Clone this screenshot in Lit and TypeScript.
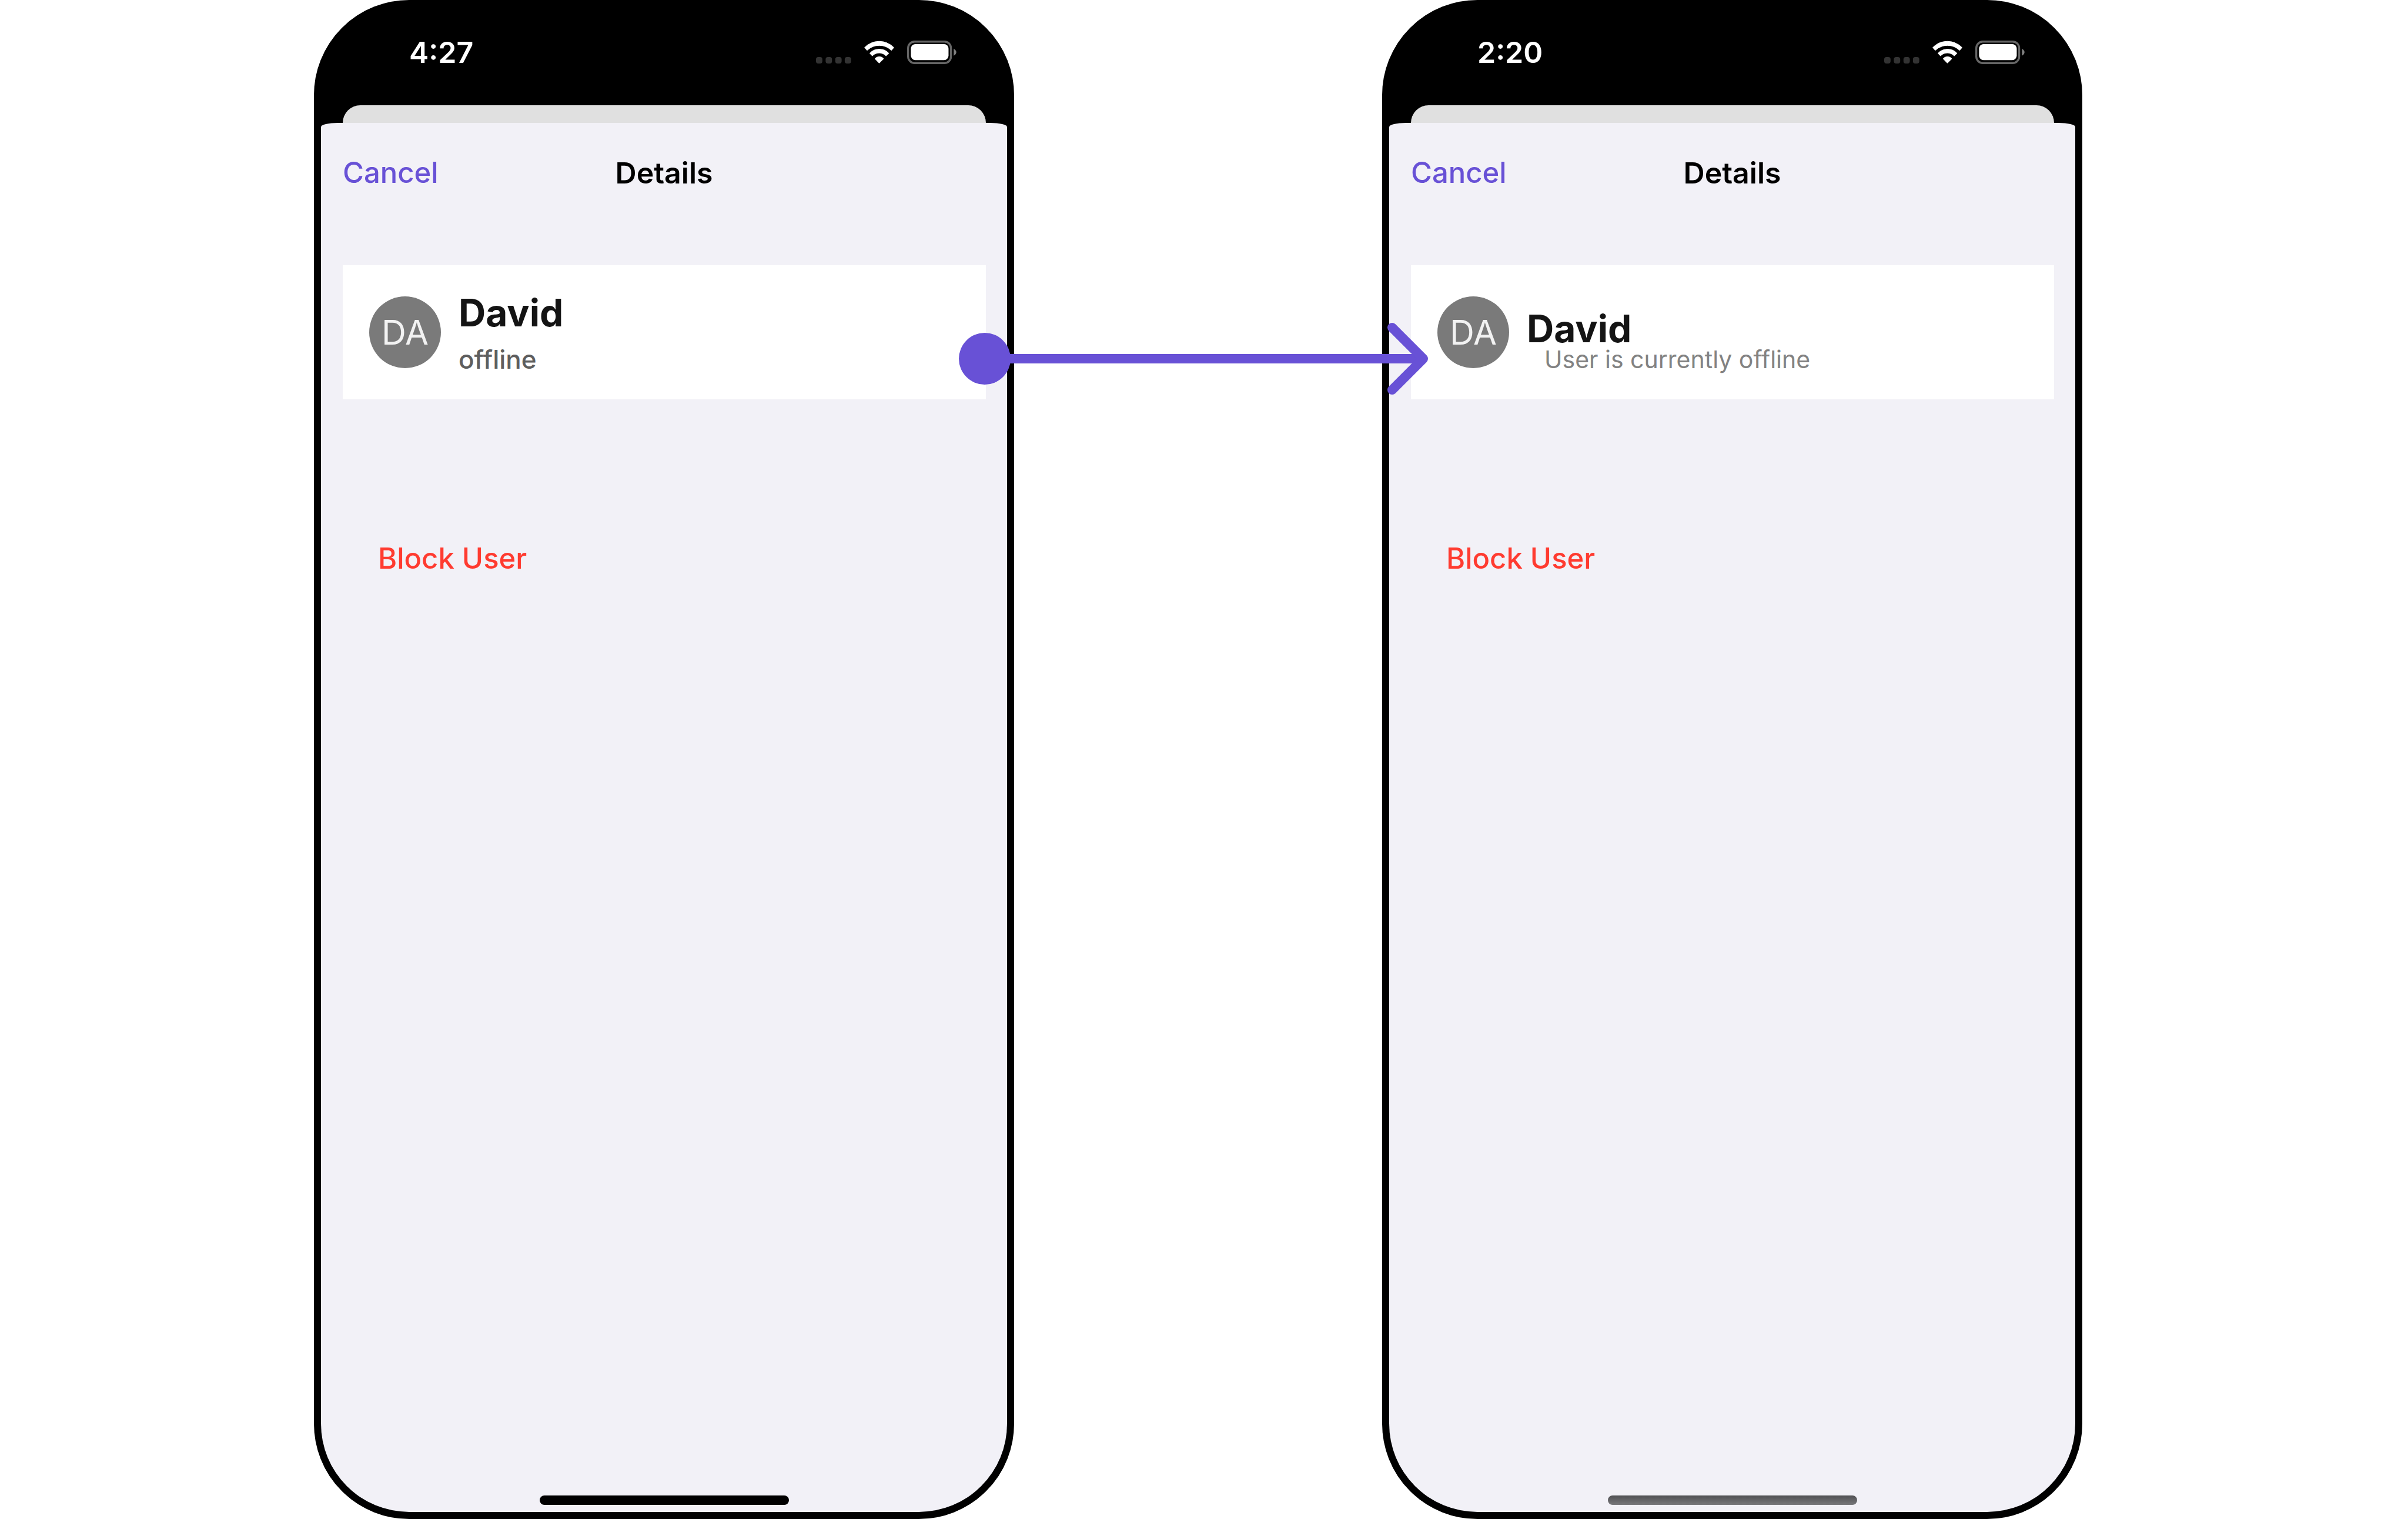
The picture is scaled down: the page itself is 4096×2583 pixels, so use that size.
import { LitElement, html, css, svg } from "lit";
import { customElement, property } from "lit/decorators.js";

const signalDots = svg`
  <rect x="112" y="170" width="39" height="39" rx="14"/>
  <rect x="171" y="170" width="39" height="39" rx="14"/>
  <rect x="230" y="170" width="39" height="39" rx="14"/>
  <rect x="288" y="170" width="39" height="39" rx="14"/>`;

@customElement("status-bar")
export class StatusBar extends LitElement {
  @property() time = "";

  static styles = css`
    :host {
      display: flex;
      align-items: center;
      gap: 22px;
      padding: 47px 86px 60px 150px;
      color: #fff;
    }
    .time {
      margin-right: auto;
      font-size: 50px;
      line-height: 60px;
      font-weight: 600;
    }
    svg {
      display: block;
      height: 40px;
    }
    .dots {
      width: 60px;
      fill: #333;
    }
    .wifi {
      width: 51px;
      fill: #fff;
      stroke: #fff;
      stroke-width: 4;
      stroke-linejoin: round;
    }
    .battery {
      width: 84px;
    }
  `;

  render() {
    return html`
      <span class="time">${this.time}</span>
      <svg class="dots" viewBox="112 69 216 144" aria-hidden="true">${signalDots}</svg>
      <svg class="wifi" viewBox="407 69 184 144" aria-hidden="true">
        <path d="M410 112A122 122 0 0 1 588 112L574 128A108 108 0 0 0 425 128Z" />
        <path d="M442 147A78 78 0 0 1 557 147L541 162A60 60 0 0 0 457 162Z" />
        <path d="M474 180A34 34 0 0 1 525 180L499 206Z" />
      </svg>
      <svg class="battery" viewBox="672 69 304 144" aria-hidden="true">
        <rect x="678" y="75" width="264" height="132" rx="40" fill="none" stroke="#666" stroke-width="12" />
        <rect x="695" y="90" width="232" height="99" rx="28" fill="#fff" />
        <path d="M959 118Q975 128 975 140Q975 152 959 162Z" fill="#808080" />
      </svg>
    `;
  }
}

@customElement("details-phone")
export class DetailsPhone extends LitElement {
  @property() time = "";
  @property() status = "";
  @property({ type: Boolean }) custom = false;

  static styles = css`
    :host {
      display: flex;
      flex-direction: column;
      box-sizing: border-box;
      min-height: 100vh;
      border: 12px solid #000;
      border-radius: 162px;
      background: #000;
      overflow: hidden;
    }
    .peek {
      height: 30px;
      margin: 0 36px 0 37px;
      border-radius: 30px 30px 0 0;
      background: #e0e0e0;
    }
    .sheet {
      flex: 1;
      display: flex;
      flex-direction: column;
      border-radius: 28px 28px 0 0 / 7px 7px 0 0;
      background: #f2f1f7;
    }
    .nav {
      display: grid;
      grid-template-columns: 1fr auto 1fr;
      align-items: center;
      height: 170px;
      padding: 0 37px;
    }
    .title {
      margin: 0;
      font-size: 50px;
      line-height: 60px;
      font-weight: 600;
      color: #000;
    }
    button {
      justify-self: start;
      align-self: start;
      padding: 0;
      border: 0;
      background: none;
      font: inherit;
      font-size: 49px;
      line-height: 60px;
      font-weight: 500;
      cursor: pointer;
    }
    .cancel {
      align-self: center;
      color: #6851d6;
    }
    .card {
      display: flex;
      align-items: center;
      gap: 30px;
      box-sizing: border-box;
      min-height: 228px;
      margin: 72px 36px 0 37px;
      padding: 0 45px;
      background: #fff;
    }
    .avatar {
      display: grid;
      place-items: center;
      width: 122px;
      height: 122px;
      border-radius: 50%;
      background: #7a7a7a;
      color: #f2f2f2;
      font-size: 58px;
      line-height: 60px;
    }
    .info {
      display: flex;
      flex-direction: column;
      gap: 11px;
    }
    .name {
      margin: 0;
      font-size: 64px;
      line-height: 80px;
      font-weight: 700;
      color: #141414;
    }
    .status {
      margin: 0;
      font-size: 44px;
      line-height: 56px;
      font-weight: 500;
      color: #5e5e5e;
    }
    .info.custom {
      gap: 0;
      padding-top: 40px;
    }
    .custom .name {
      line-height: 52px;
    }
    .custom .status {
      padding-left: 30px;
      font-size: 41px;
      line-height: 52px;
      font-weight: 400;
      color: #828282;
    }
    .block {
      margin: 241px 0 0 97px;
      color: #ff3b30;
    }
    .home {
      width: 424px;
      height: 16px;
      margin: auto auto 12px;
      border-radius: 8px;
      background: #000;
    }
    .home.custom {
      background: linear-gradient(#505053, #78787b);
    }
  `;

  render() {
    const variant = this.custom ? "custom" : "";
    return html`
      <status-bar .time=${this.time}></status-bar>
      <div class="peek"></div>
      <main class="sheet">
        <header class="nav">
          <button class="cancel" type="button">Cancel</button>
          <h1 class="title">Details</h1>
        </header>
        <section class="card">
          <div class="avatar">DA</div>
          <div class="info ${variant}">
            <h2 class="name">David</h2>
            <p class="status">${this.status}</p>
          </div>
        </section>
        <button class="block" type="button">Block User</button>
        <div class="home ${variant}"></div>
      </main>
    `;
  }
}

@customElement("app-root")
export class AppRoot extends LitElement {
  static styles = css`
    :host {
      display: grid;
      grid-template-columns: 534fr 1191fr 626fr 1191fr 554fr;
      min-height: 100vh;
      background: #fff;
      font-family: Inter, "Liberation Sans", sans-serif;
    }
    .before {
      grid-column: 2;
    }
    .after {
      grid-column: 4;
    }
    .between {
      grid-column: 3;
      grid-row: 1;
      position: relative;
      z-index: 1;
    }
    .before,
    .after {
      grid-row: 1;
    }
    /* The connector lies over the edges of both phones. */
    .connector {
      position: absolute;
      top: 549px;
      left: -94px;
      right: -78px;
      display: flex;
      align-items: center;
    }
    .dot {
      width: 88px;
      height: 88px;
      border-radius: 50%;
      background: #6851d6;
    }
    .line {
      flex: 1;
      height: 16px;
      margin: 0 -56px 0 -8px;
      background: #6851d6;
    }
    .head {
      display: block;
      width: 70px;
      height: 122px;
      fill: none;
      stroke: #6851d6;
      stroke-width: 16;
      stroke-linecap: round;
      stroke-linejoin: round;
    }
  `;

  render() {
    return html`
      <details-phone class="before" time="4:27" status="offline"></details-phone>
      <div class="between">
        <div class="connector">
          <span class="dot"></span>
          <span class="line"></span>
          <svg class="head" viewBox="0 0 70 122" aria-hidden="true">
            <path d="M9 8L62 61L9 114" />
          </svg>
        </div>
      </div>
      <details-phone class="after" time="2:20" status="User is currently offline" custom></details-phone>
    `;
  }
}
